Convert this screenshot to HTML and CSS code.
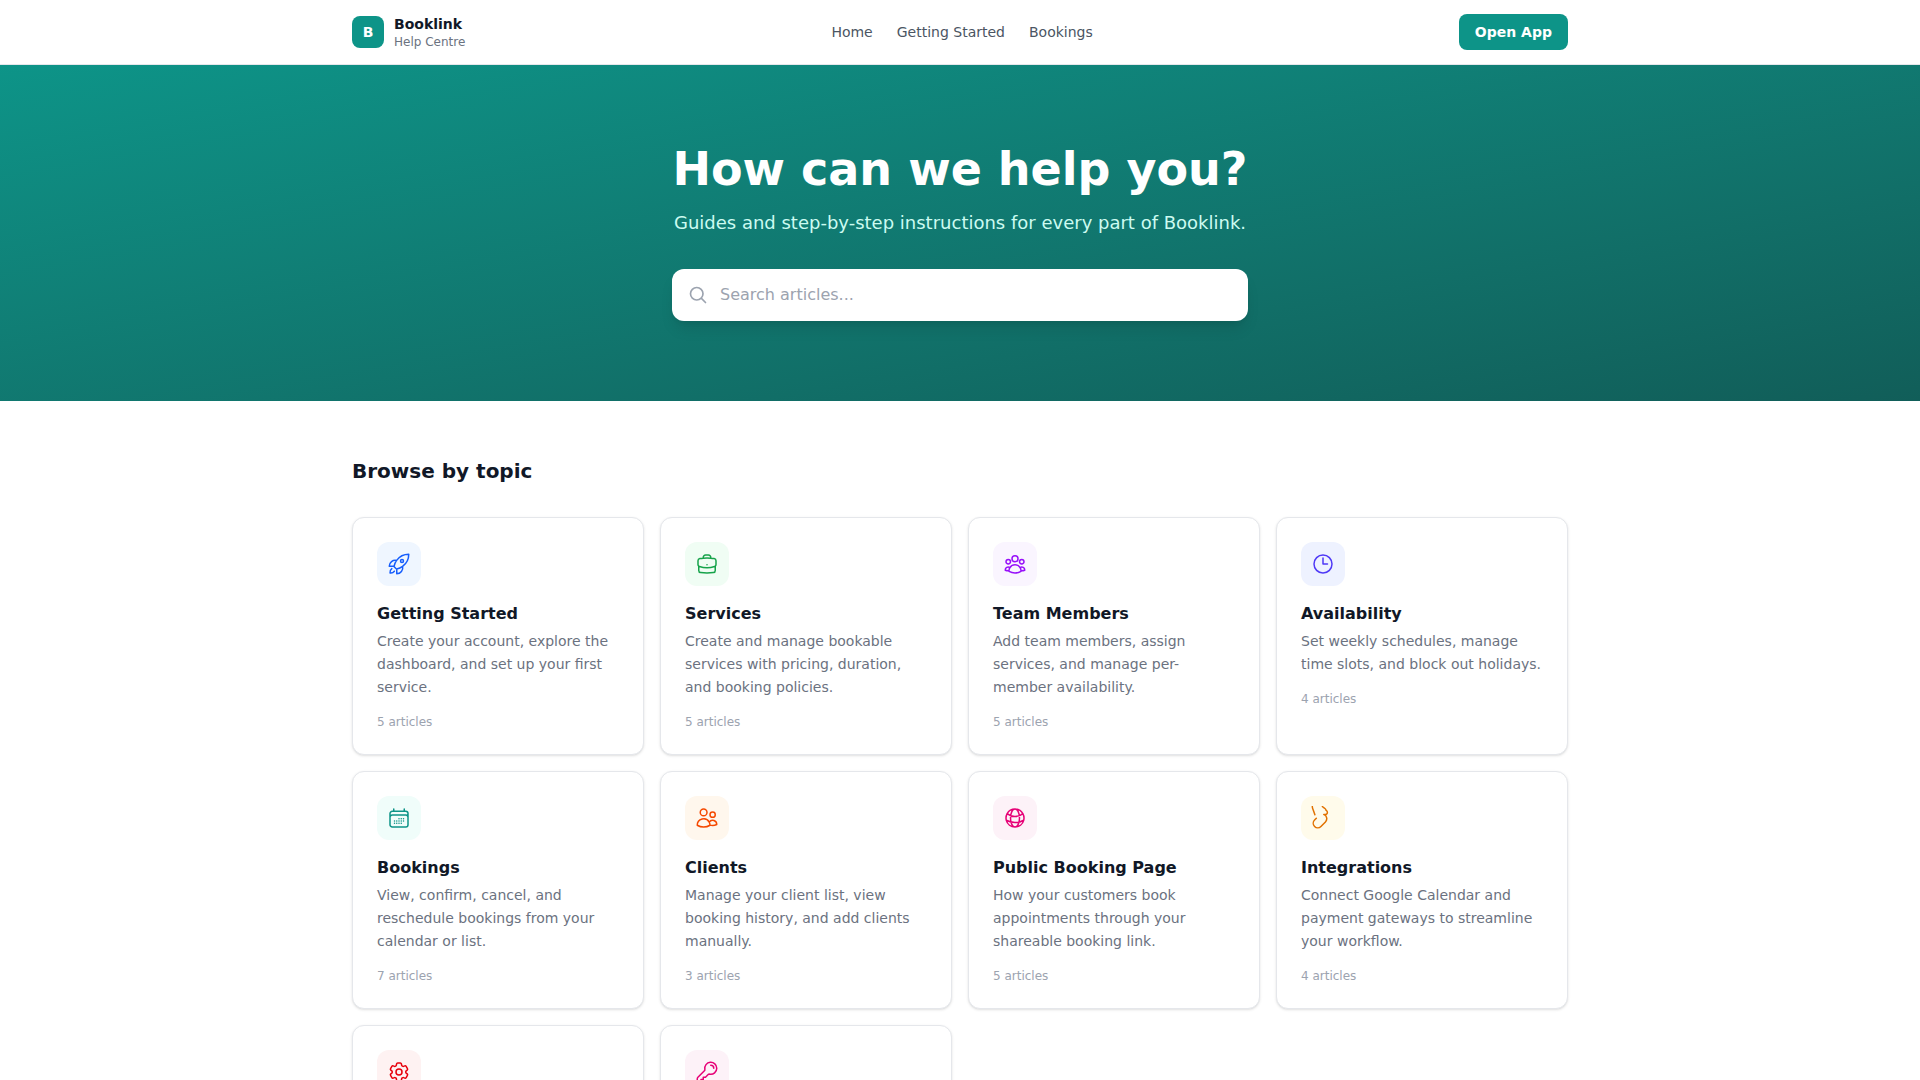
FILE: index.html
```html
<!DOCTYPE html>
<html lang="en">
<head>
<meta charset="utf-8">
<meta name="viewport" content="width=device-width, initial-scale=1">
<title>Booklink Help Centre</title>
<link rel="stylesheet" href="styles.css">
</head>
<body>

    <header class="header">
        <div class="container header-inner">
            <a class="brand" href="#">
                <span class="logo">B</span>
                <span class="brand-text">
                    <span class="brand-name">Booklink</span>
                    <span class="brand-sub">Help Centre</span>
                </span>
            </a>
            <nav class="nav">
                <a href="#">Home</a>
                <a href="#getting-started">Getting Started</a>
                <a href="#bookings">Bookings</a>
            </nav>
            <a class="open-app" href="#">Open App</a>
        </div>
    </header>

    <section class="hero">
        <div class="hero-inner">
            <h1>How can we help you?</h1>
            <p>Guides and step-by-step instructions for every part of Booklink.</p>
            <form class="search" role="search">
                <svg class="icon search-icon" viewBox="0 0 24 24" aria-hidden="true"><path d="m21 21-5.197-5.197m0 0A7.5 7.5 0 1 0 5.196 5.196a7.5 7.5 0 0 0 10.607 10.607Z"/></svg>
                <input type="search" placeholder="Search articles..." aria-label="Search articles">
            </form>
        </div>
    </section>

    <main class="container main">
        <h2>Browse by topic</h2>
        <div class="topics">

            <a class="card" id="getting-started" href="#">
                <span class="tile blue"><svg class="icon" viewBox="0 0 24 24" aria-hidden="true"><path d="M15.59 14.37a6 6 0 0 1-5.84 7.38v-4.8m5.84-2.58a14.98 14.98 0 0 0 6.16-12.12A14.98 14.98 0 0 0 9.631 8.41m5.96 5.96a14.926 14.926 0 0 1-5.841 2.58m-.119-8.54a6 6 0 0 0-7.381 5.84h4.8m2.581-5.84a14.927 14.927 0 0 0-2.58 5.84m2.699 2.7c-.103.021-.207.041-.311.06a15.09 15.09 0 0 1-2.448-2.448 14.9 14.9 0 0 1 .06-.312m-2.24 2.39a4.493 4.493 0 0 0-1.757 4.306 4.493 4.493 0 0 0 4.306-1.758M16.5 9a1.5 1.5 0 1 1-3 0 1.5 1.5 0 0 1 3 0Z"/></svg></span>
                <h3>Getting Started</h3>
                <p>Create your account, explore the dashboard, and set up your first service.</p>
                <span class="count">5 articles</span>
            </a>

            <a class="card" href="#">
                <span class="tile green"><svg class="icon" viewBox="0 0 24 24" aria-hidden="true"><path d="M20.25 14.15v4.25c0 1.094-.787 2.036-1.872 2.18-2.087.277-4.216.42-6.378.42s-4.291-.143-6.378-.42c-1.085-.144-1.872-1.086-1.872-2.18v-4.25m16.5 0a2.18 2.18 0 0 0 .75-1.661V8.706c0-1.081-.768-2.015-1.837-2.175a48.114 48.114 0 0 0-3.413-.387m4.5 8.006c-.194.165-.42.295-.673.38A23.978 23.978 0 0 1 12 15.75c-2.648 0-5.195-.429-7.577-1.22a2.016 2.016 0 0 1-.673-.38m0 0A2.18 2.18 0 0 1 3 12.489V8.706c0-1.081.768-2.015 1.837-2.175a48.111 48.111 0 0 1 3.413-.387m7.5 0V5.25A2.25 2.25 0 0 0 13.5 3h-3a2.25 2.25 0 0 0-2.25 2.25v.894m7.5 0a48.667 48.667 0 0 0-7.5 0M12 12.75h.008v.008H12v-.008Z"/></svg></span>
                <h3>Services</h3>
                <p>Create and manage bookable services with pricing, duration, and booking policies.</p>
                <span class="count">5 articles</span>
            </a>

            <a class="card" href="#">
                <span class="tile purple"><svg class="icon" viewBox="0 0 24 24" aria-hidden="true"><path d="M18 18.72a9.094 9.094 0 0 0 3.741-.479 3 3 0 0 0-4.682-2.72m.94 3.198.001.031c0 .225-.012.447-.037.666A11.944 11.944 0 0 1 12 21c-2.17 0-4.207-.576-5.963-1.584A6.062 6.062 0 0 1 6 18.719m12 0a5.971 5.971 0 0 0-.941-3.197m0 0A5.995 5.995 0 0 0 12 12.75a5.995 5.995 0 0 0-5.058 2.772m0 0a3 3 0 0 0-4.681 2.72 8.986 8.986 0 0 0 3.74.477m.94-3.197a5.971 5.971 0 0 0-.94 3.197M15 6.75a3 3 0 1 1-6 0 3 3 0 0 1 6 0Zm6 3a2.25 2.25 0 1 1-4.5 0 2.25 2.25 0 0 1 4.5 0Zm-13.5 0a2.25 2.25 0 1 1-4.5 0 2.25 2.25 0 0 1 4.5 0Z"/></svg></span>
                <h3>Team Members</h3>
                <p>Add team members, assign services, and manage per-member availability.</p>
                <span class="count">5 articles</span>
            </a>

            <a class="card" href="#">
                <span class="tile indigo"><svg class="icon" viewBox="0 0 24 24" aria-hidden="true"><path d="M12 6v6h4.5m4.5 0a9 9 0 1 1-18 0 9 9 0 0 1 18 0Z"/></svg></span>
                <h3>Availability</h3>
                <p>Set weekly schedules, manage time slots, and block out holidays.</p>
                <span class="count">4 articles</span>
            </a>

            <a class="card" id="bookings" href="#">
                <span class="tile teal"><svg class="icon" viewBox="0 0 24 24" aria-hidden="true"><path d="M6.75 3v2.25M17.25 3v2.25M3 18.75V7.5a2.25 2.25 0 0 1 2.25-2.25h13.5A2.25 2.25 0 0 1 21 7.5v11.25m-18 0A2.25 2.25 0 0 0 5.25 21h13.5A2.25 2.25 0 0 0 21 18.75m-18 0v-7.5A2.25 2.25 0 0 1 5.25 9h13.5A2.25 2.25 0 0 1 21 11.25v7.5m-9-6h.008v.008H12v-.008ZM12 15h.008v.008H12V15Zm0 2.25h.008v.008H12v-.008ZM9.75 15h.008v.008H9.75V15Zm0 2.25h.008v.008H9.75v-.008ZM7.5 15h.008v.008H7.5V15Zm0 2.25h.008v.008H7.5v-.008Zm6.75-4.5h.008v.008h-.008v-.008Zm0 2.25h.008v.008h-.008V15Zm0 2.25h.008v.008h-.008v-.008Zm2.25-4.5h.008v.008H16.5v-.008Zm0 2.25h.008v.008H16.5V15Z"/></svg></span>
                <h3>Bookings</h3>
                <p>View, confirm, cancel, and reschedule bookings from your calendar or list.</p>
                <span class="count">7 articles</span>
            </a>

            <a class="card" href="#">
                <span class="tile orange"><svg class="icon" viewBox="0 0 24 24" aria-hidden="true"><path d="M15 19.128a9.38 9.38 0 0 0 2.625.372 9.337 9.337 0 0 0 4.121-.952 4.125 4.125 0 0 0-7.533-2.493M15 19.128v-.003c0-1.113-.285-2.16-.786-3.07M15 19.128v.106A12.318 12.318 0 0 1 8.624 21c-2.331 0-4.512-.645-6.374-1.766l-.001-.109a6.375 6.375 0 0 1 11.964-3.07M12 6.375a3.375 3.375 0 1 1-6.75 0 3.375 3.375 0 0 1 6.75 0Zm8.25 2.25a2.625 2.625 0 1 1-5.25 0 2.625 2.625 0 0 1 5.25 0Z"/></svg></span>
                <h3>Clients</h3>
                <p>Manage your client list, view booking history, and add clients manually.</p>
                <span class="count">3 articles</span>
            </a>

            <a class="card" href="#">
                <span class="tile pink"><svg class="icon" viewBox="0 0 24 24" aria-hidden="true"><path d="M12 21a9.004 9.004 0 0 0 8.716-6.747M12 21a9.004 9.004 0 0 1-8.716-6.747M12 21c2.485 0 4.5-4.03 4.5-9S14.485 3 12 3m0 18c-2.485 0-4.5-4.03-4.5-9S9.515 3 12 3m0 0a8.997 8.997 0 0 1 7.843 4.582M12 3a8.997 8.997 0 0 0-7.843 4.582m15.686 0A11.953 11.953 0 0 1 12 10.5c-2.998 0-5.74-1.1-7.843-2.918m15.686 0A8.959 8.959 0 0 1 21 12c0 .778-.099 1.533-.284 2.253m0 0A17.919 17.919 0 0 1 12 16.5c-3.162 0-6.133-.815-8.716-2.247m0 0A9.015 9.015 0 0 1 3 12c0-1.605.42-3.113 1.157-4.418"/></svg></span>
                <h3>Public Booking Page</h3>
                <p>How your customers book appointments through your shareable booking link.</p>
                <span class="count">5 articles</span>
            </a>

            <a class="card" href="#">
                <span class="tile amber"><svg class="icon" viewBox="0 0 24 24" aria-hidden="true"><path d="M13.19 8.688a4.5 4.5 0 0 1 1.242 7.244l-4.5 4.5a4.5 4.5 0 0 1-6.364-6.364l1.757-1.757M12.8 8.5c1.9.4 3.6-.4 3.6-2 0-1.4-.9-1.9-1.6-2.6.3-1.2-1.9-1.7-3.4-3.4M1.3.5c0 1.8.6 2.6 1.1 4l1.5 4.2"/></svg></span>
                <h3>Integrations</h3>
                <p>Connect Google Calendar and payment gateways to streamline your workflow.</p>
                <span class="count">4 articles</span>
            </a>

            <a class="card" href="#" aria-label="Settings">
                <span class="tile red"><svg class="icon" viewBox="0 0 24 24" aria-hidden="true"><path d="M9.594 3.94c.09-.542.56-.94 1.11-.94h2.593c.55 0 1.02.398 1.11.94l.213 1.281c.063.374.313.686.645.87.074.04.147.083.22.127.325.196.72.257 1.075.124l1.217-.456a1.125 1.125 0 0 1 1.37.49l1.296 2.247a1.125 1.125 0 0 1-.26 1.431l-1.003.827c-.293.241-.438.613-.43.992a7.723 7.723 0 0 1 0 .255c-.008.378.137.75.43.991l1.004.827c.424.35.534.955.26 1.43l-1.298 2.247a1.125 1.125 0 0 1-1.369.491l-1.217-.456c-.355-.133-.75-.072-1.076.124a6.47 6.47 0 0 1-.22.128c-.331.183-.581.495-.644.869l-.213 1.281c-.09.543-.56.94-1.11.94h-2.594c-.55 0-1.019-.398-1.11-.94l-.213-1.281c-.062-.374-.312-.686-.644-.87a6.52 6.52 0 0 1-.22-.127c-.325-.196-.72-.257-1.076-.124l-1.217.456a1.125 1.125 0 0 1-1.369-.49l-1.297-2.247a1.125 1.125 0 0 1 .26-1.431l1.004-.827c.292-.24.437-.613.43-.991a6.932 6.932 0 0 1 0-.255c.007-.38-.138-.751-.43-.992l-1.004-.827a1.125 1.125 0 0 1-.26-1.43l1.297-2.247a1.125 1.125 0 0 1 1.37-.491l1.216.456c.356.133.751.072 1.076-.124.072-.044.146-.086.22-.128.332-.183.582-.495.644-.869l.214-1.28Z"/><path d="M15 12a3 3 0 1 1-6 0 3 3 0 0 1 6 0Z"/></svg></span>
            </a>

            <a class="card" href="#" aria-label="Account">
                <span class="tile pink"><svg class="icon" viewBox="0 0 24 24" aria-hidden="true"><path d="M15.75 5.25a3 3 0 0 1 3 3m3 0a6 6 0 0 1-7.029 5.912c-.563-.097-1.159.026-1.563.43L10.5 17.25H8.25v2.25H6v2.25H2.25v-2.818c0-.597.237-1.17.659-1.591l6.499-6.499c.404-.404.527-1 .43-1.563A6 6 0 1 1 21.75 8.25Z"/></svg></span>
            </a>

        </div>
    </main>

</body>
</html>
```
FILE: styles.css
```css
* {
  box-sizing: border-box;
}

body {
  margin: 0;
  background: #fff;
  color: #111827;
  font-family: "DejaVu Sans", sans-serif;
  font-size: 16px;
  line-height: 24px;
}

a {
  color: inherit;
  text-decoration: none;
}

h1, h2, h3, p {
  margin: 0;
}

.container {
  max-width: 1280px;
  margin: 0 auto;
  padding: 0 32px;
}

.icon {
  width: 24px;
  height: 24px;
  fill: none;
  stroke: currentColor;
  stroke-width: 1.5;
  stroke-linecap: round;
  stroke-linejoin: round;
}

/* Header */
.header {
  border-bottom: 1px solid #e5e7eb;
}

.header-inner {
  display: flex;
  align-items: center;
  justify-content: space-between;
  height: 64px;
}

.brand {
  display: flex;
  align-items: center;
  gap: 10px;
}

.logo {
  display: flex;
  align-items: center;
  justify-content: center;
  width: 32px;
  height: 32px;
  border-radius: 8px;
  background: #0d9488;
  color: #fff;
  font-size: 14px;
  font-weight: bold;
}

.brand-text {
  display: flex;
  flex-direction: column;
}

.brand-name {
  font-size: 14px;
  font-weight: bold;
  line-height: 20px;
}

.brand-sub {
  color: #6b7280;
  font-size: 12px;
  line-height: 16px;
}

.nav {
  display: flex;
  gap: 24px;
  color: #4b5563;
  font-size: 14px;
}

.open-app {
  padding: 8px 16px;
  border-radius: 8px;
  background: #0d9488;
  color: #fff;
  font-size: 14px;
  font-weight: bold;
  line-height: 20px;
}

/* Hero with search */
.hero {
  padding: 80px 32px;
  background: linear-gradient(to bottom right in oklab, #0d9488, #115e59);
  text-align: center;
}

.hero-inner {
  max-width: 576px;
  margin: 0 auto;
}

.hero h1 {
  color: #fff;
  font-size: 46px;
  line-height: 48px;
  white-space: nowrap;
}

.hero p {
  margin: 16px 0 32px;
  color: #ccfbf1;
  font-size: 18px;
  line-height: 28px;
}

.search {
  display: flex;
  align-items: center;
  gap: 12px;
  height: 52px;
  padding: 0 16px;
  border-radius: 12px;
  background: #fff;
  box-shadow: 0 10px 15px -3px rgba(0, 0, 0, 0.1), 0 4px 6px -4px rgba(0, 0, 0, 0.1);
}

.search-icon {
  width: 20px;
  height: 20px;
  color: #9ca3af;
  stroke-width: 2;
}

.search input {
  flex: 1;
  min-width: 0;
  padding: 0;
  border: 0;
  outline: 0;
  background: none;
  color: #111827;
  font: inherit;
}

.search input::placeholder {
  color: #9ca3af;
}

/* Topic cards */
.main {
  padding-top: 56px;
  padding-bottom: 56px;
}

.main h2 {
  margin-bottom: 32px;
  font-size: 20px;
  line-height: 28px;
}

.topics {
  display: grid;
  grid-template-columns: repeat(4, 1fr);
  gap: 16px;
}

.card {
  padding: 24px;
  border: 1px solid #e5e7eb;
  border-radius: 12px;
  background: #fff;
  box-shadow: 0 1px 3px rgba(0, 0, 0, 0.1), 0 1px 2px -1px rgba(0, 0, 0, 0.1);
}

.card h3 {
  margin: 16px 0 4px;
  font-size: 16px;
  line-height: 24px;
}

.card p {
  color: #6b7280;
  font-size: 14px;
  line-height: 23px;
}

.count {
  display: block;
  margin-top: 16px;
  color: #9ca3af;
  font-size: 12px;
  line-height: 15px;
}

.tile {
  display: flex;
  align-items: center;
  justify-content: center;
  width: 44px;
  height: 44px;
  border-radius: 12px;
}

.blue { background: #eff6ff; color: #155dfc; }
.green { background: #f0fdf4; color: #16a34a; }
.purple { background: #faf5ff; color: #9810fa; }
.indigo { background: #eef2ff; color: #4f39f6; }
.teal { background: #f0fdfa; color: #0d9488; }
.orange { background: #fff7ed; color: #f54900; }
.pink { background: #fdf2f8; color: #e60076; }
.amber { background: #fffbeb; color: #e17100; }
.red { background: #fef2f2; color: #e7000b; }

@media (max-width: 1024px) {
  .topics {
    grid-template-columns: repeat(2, 1fr);
  }
}

@media (max-width: 640px) {
  .nav {
    display: none;
  }

  .hero h1 {
    font-size: 32px;
    white-space: normal;
  }

  .topics {
    grid-template-columns: 1fr;
  }
}
```
